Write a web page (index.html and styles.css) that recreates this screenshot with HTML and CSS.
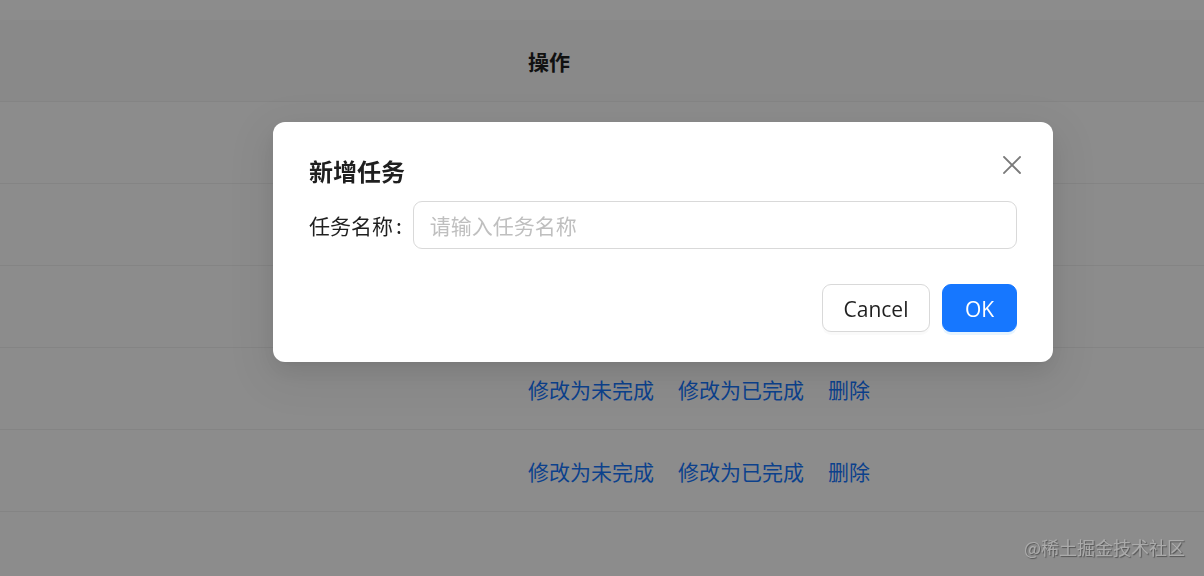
FILE: index.html
```html
<!DOCTYPE html>
<html lang="zh-CN">
<head>
<meta charset="utf-8">
<title>任务列表</title>
<link rel="stylesheet" href="styles.css">
</head>
<body>
<div class="page">
  <div class="table">
    <div class="row head">
      <div class="cell"></div>
      <div class="cell th">操作</div>
    </div>
    <div class="row">
      <div class="cell"></div>
      <div class="cell actions"></div>
    </div>
    <div class="row">
      <div class="cell"></div>
      <div class="cell actions"></div>
    </div>
    <div class="row">
      <div class="cell"></div>
      <div class="cell actions"></div>
    </div>
    <div class="row">
      <div class="cell"></div>
      <div class="cell actions"><a>修改为未完成</a><a>修改为已完成</a><a>删除</a></div>
    </div>
    <div class="row">
      <div class="cell"></div>
      <div class="cell actions"><a>修改为未完成</a><a>修改为已完成</a><a>删除</a></div>
    </div>
  </div>
</div>

<div class="mask"></div>

<div class="modal">
  <button class="close" aria-label="Close">
    <svg width="18" height="18" viewBox="0 0 18 18"><path d="M1 1 L17 17 M17 1 L1 17" stroke="#7a7a7a" stroke-width="1.8" fill="none" stroke-linecap="square"/></svg>
  </button>
  <div class="title">新增任务</div>
  <div class="form-item">
    <label class="label">任务名称<span class="colon">:</span></label>
    <div class="input"><span class="placeholder">请输入任务名称</span></div>
  </div>
  <div class="footer">
    <button class="btn btn-default">Cancel</button>
    <button class="btn btn-primary">OK</button>
  </div>
</div>

<div class="watermark">@稀土掘金技术社区</div>
</body>
</html>
```

FILE: styles.css
```css
* { box-sizing: border-box; }

html, body {
  margin: 0;
  padding: 0;
  width: 1204px;
  height: 576px;
  overflow: hidden;
  background: #ffffff;
  font-family: "Noto Sans CJK SC", "Noto Sans", sans-serif;
  color: rgba(0, 0, 0, 0.88);
}

.page {
  padding-top: 20px;
}

.table {
  display: flex;
  flex-direction: column;
}

.row {
  display: grid;
  grid-template-columns: 504px 1fr;
  height: 82px;
  border-bottom: 1px solid #f0f0f0;
}

.row.head {
  background: #fafafa;
}

.cell {
  display: flex;
  align-items: center;
  padding: 0 24px;
  font-size: 21px;
}

.th {
  font-weight: 700;
  color: #1f1f1f;
}

.actions {
  gap: 24px;
}

.actions a {
  color: #1677ff;
  cursor: pointer;
}

.mask {
  position: fixed;
  inset: 0;
  background: rgba(0, 0, 0, 0.45);
}

.modal {
  position: absolute;
  left: 273px;
  top: 122px;
  width: 780px;
  padding: 30px 36px;
  background: #ffffff;
  border-radius: 12px;
  box-shadow: 0 9px 24px 0 rgba(0, 0, 0, 0.08), 0 4px 9px -6px rgba(0, 0, 0, 0.12), 0 13px 42px 12px rgba(0, 0, 0, 0.05);
}

.close {
  position: absolute;
  top: 26px;
  right: 25px;
  width: 33px;
  height: 33px;
  padding: 0;
  border: 0;
  background: transparent;
  display: flex;
  align-items: center;
  justify-content: center;
}

.title {
  font-size: 24px;
  font-weight: 700;
  line-height: 36px;
  color: #1f1f1f;
  margin-bottom: 12px;
  padding-top: 1px;
}

.form-item {
  display: flex;
  align-items: center;
  height: 48px;
}

.label {
  font-size: 21px;
  color: #1f1f1f;
  display: flex;
  align-items: center;
}

.colon {
  margin-left: 3px;
  margin-right: 11px;
}

.input {
  flex: 1;
  height: 48px;
  border: 1px solid #d9d9d9;
  border-radius: 9px;
  padding: 0 16px;
  display: flex;
  align-items: center;
}

.placeholder {
  font-size: 21px;
  color: #bfbfbf;
}

.footer {
  display: flex;
  justify-content: flex-end;
  gap: 12px;
  margin-top: 35px;
}

.btn {
  height: 48px;
  border-radius: 9px;
  font-family: "Open Sans", "Noto Sans", sans-serif;
  font-size: 21px;
  padding: 2px 0 0;
  display: flex;
  align-items: center;
  justify-content: center;
}

.btn-default {
  width: 108px;
  background: #ffffff;
  border: 1px solid #d9d9d9;
  color: #1f1f1f;
  box-shadow: 0 3px 0 rgba(0, 0, 0, 0.02);
}

.btn-primary {
  width: 75px;
  background: #1677ff;
  border: 1px solid #1677ff;
  color: #ffffff;
  box-shadow: 0 3px 0 rgba(5, 145, 255, 0.1);
}

.watermark {
  position: absolute;
  left: 1024px;
  top: 535px;
  font-size: 18px;
  line-height: 24px;
  color: #ababab;
  text-shadow: 1px 1px 1px rgba(0, 0, 0, 0.4);
  white-space: nowrap;
}
```
